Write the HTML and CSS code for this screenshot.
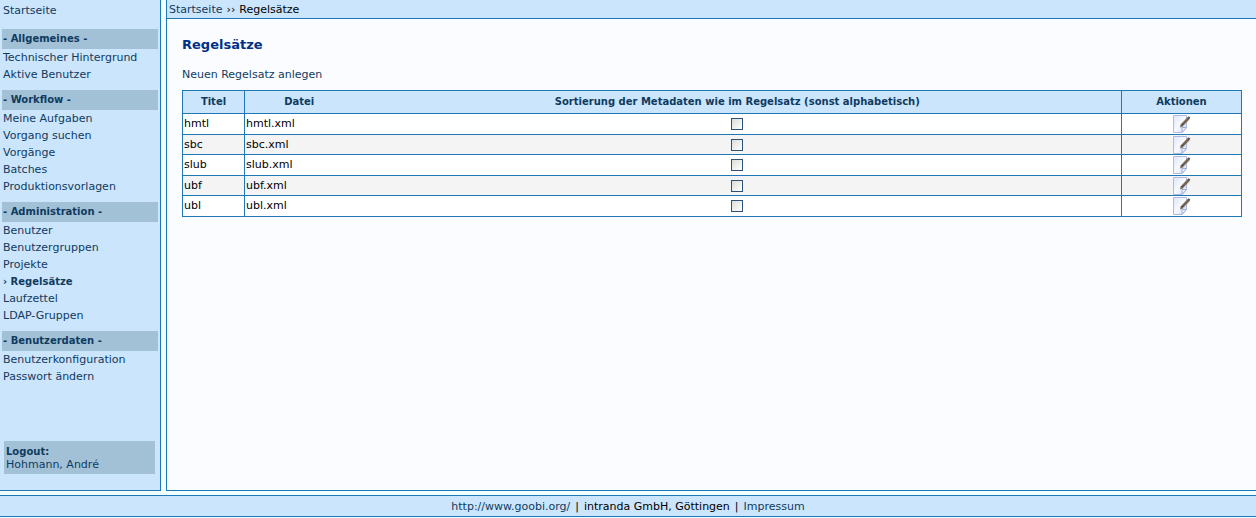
FILE: index.html
```html
<!DOCTYPE html>
<html lang="de">
<head>
<meta charset="utf-8">
<title>Regelsätze</title>
<link rel="stylesheet" href="styles.css">
</head>
<body>
<svg class="defs" width="0" height="0" aria-hidden="true">
  <defs>
    <linearGradient id="paper" x1="0" y1="0" x2="1" y2="1">
      <stop offset="0" stop-color="#dfe5fa"/><stop offset="0.5" stop-color="#f7f9ff"/><stop offset="1" stop-color="#d3dcf7"/>
    </linearGradient>
    <symbol id="edit" viewBox="0 0 18 18">
      <path d="M.5 .5h13v12l-4.500 5H.5z" fill="url(#paper)" stroke="#adbae2"/>
      <path d="M9 17.500v-5h4.500z" fill="#edf2ff" stroke="#9daddf"/>
      <path d="M8 11.500L16 3" stroke="#b5aaa3" stroke-width="4" opacity=".5"/>
      <path d="M8.500 10.500L16.500 2" stroke="#5d5040" stroke-width="2.400"/>
      <path d="M7 12.500l.8-3 2 2z" fill="#706a65"/>
      <path d="M10 8.500l5-5.300" stroke="#a58c68" stroke-width=".7"/>
    </symbol>
  </defs>
</svg>
<div class="page">
  <div class="columns">
    <nav class="sidebar">
      <a class="item home" href="#">Startseite</a>
      <section class="group">
        <h2>- Allgemeines -</h2>
        <a class="item" href="#">Technischer Hintergrund</a>
        <a class="item" href="#">Aktive Benutzer</a>
      </section>
      <section class="group">
        <h2>- Workflow -</h2>
        <a class="item" href="#">Meine Aufgaben</a>
        <a class="item" href="#">Vorgang suchen</a>
        <a class="item" href="#">Vorgänge</a>
        <a class="item" href="#">Batches</a>
        <a class="item" href="#">Produktionsvorlagen</a>
      </section>
      <section class="group">
        <h2>- Administration -</h2>
        <a class="item" href="#">Benutzer</a>
        <a class="item" href="#">Benutzergruppen</a>
        <a class="item" href="#">Projekte</a>
        <a class="item active" href="#">› Regelsätze</a>
        <a class="item" href="#">Laufzettel</a>
        <a class="item" href="#">LDAP-Gruppen</a>
      </section>
      <section class="group">
        <h2>- Benutzerdaten -</h2>
        <a class="item" href="#">Benutzerkonfiguration</a>
        <a class="item" href="#">Passwort ändern</a>
      </section>
      <a class="logout" href="#"><strong>Logout:</strong><span>Hohmann, André</span></a>
    </nav>
    <main class="main">
      <div class="breadcrumb"><a href="#">Startseite</a><span>››</span><span>Regelsätze</span></div>
      <div class="content">
        <h1>Regelsätze</h1>
        <a class="new" href="#">Neuen Regelsatz anlegen</a>
        <table>
          <colgroup><col class="c-title"><col class="c-file"><col><col class="c-actions"></colgroup>
          <thead>
            <tr><th>Titel</th><th class="file">Datei</th><th class="sort">Sortierung der Metadaten wie im Regelsatz (sonst alphabetisch)</th><th>Aktionen</th></tr>
          </thead>
          <tbody>
            <tr><td>hmtl</td><td class="file">hmtl.xml</td><td class="sort"><input type="checkbox" aria-label="Sortierung hmtl"></td><td class="action"><a href="#" aria-label="hmtl bearbeiten"><svg width="18" height="18"><use href="#edit"/></svg></a></td></tr>
            <tr><td>sbc</td><td class="file">sbc.xml</td><td class="sort"><input type="checkbox" aria-label="Sortierung sbc"></td><td class="action"><a href="#" aria-label="sbc bearbeiten"><svg width="18" height="18"><use href="#edit"/></svg></a></td></tr>
            <tr><td>slub</td><td class="file">slub.xml</td><td class="sort"><input type="checkbox" aria-label="Sortierung slub"></td><td class="action"><a href="#" aria-label="slub bearbeiten"><svg width="18" height="18"><use href="#edit"/></svg></a></td></tr>
            <tr><td>ubf</td><td class="file">ubf.xml</td><td class="sort"><input type="checkbox" aria-label="Sortierung ubf"></td><td class="action"><a href="#" aria-label="ubf bearbeiten"><svg width="18" height="18"><use href="#edit"/></svg></a></td></tr>
            <tr><td>ubl</td><td class="file">ubl.xml</td><td class="sort"><input type="checkbox" aria-label="Sortierung ubl"></td><td class="action"><a href="#" aria-label="ubl bearbeiten"><svg width="18" height="18"><use href="#edit"/></svg></a></td></tr>
          </tbody>
        </table>
      </div>
    </main>
  </div>
  <footer class="footer"><a href="#">http://www.goobi.org/</a><span>|</span><span>intranda GmbH, Göttingen</span><span>|</span><a href="#">Impressum</a></footer>
</div>
</body>
</html>
```
FILE: styles.css
```css
* { box-sizing: border-box; }
body {
  margin: 0;
  background: #f0ffff;
  color: #000;
  font: 11px/17px Verdana, "DejaVu Sans", sans-serif;
}
a { color: #0f3b5f; text-decoration: none; }
.defs { position: absolute; }
.page {
  display: flex;
  flex-direction: column;
  min-height: 100vh;
  padding-bottom: 1px;
}
.columns { display: flex; flex: 1; gap: 5px; margin-bottom: 4px; }
.sidebar {
  display: flex;
  flex-direction: column;
  width: 161px;
  padding: 2px 2px 16px;
  background: #cbe5fc;
  border: solid #1f78b4;
  border-width: 0 1px 1px 0;
}
.item { padding-left: 1px; }
.home { margin-bottom: 10px; }
.group { display: flex; flex-direction: column; margin-bottom: 7px; }
.group h2 {
  margin: 0;
  padding-left: 1px;
  background: #a2c1d7;
  color: #0f3b5f;
  font-size: 10px;
  line-height: 20px;
}
.active, .logout strong { font-size: 10px; font-weight: bold; }
.logout {
  display: flex;
  flex-direction: column;
  margin: auto 3px 0 2px;
  padding: 4px 2px 3px;
  background: #a2c1d7;
  line-height: 13px;
}
.main {
  flex: 1;
  background: #fafcff;
  border: solid #1f78b4;
  border-width: 0 0 1px 1px;
}
.breadcrumb {
  display: flex;
  gap: 4px;
  padding: 1px 2px 0;
  background: #cbe5fc;
  border-bottom: 1px solid #1f78b4;
}
.content { padding: 16px 14px 16px 15px; }
h1 {
  margin: 0 0 11px;
  color: #003087;
  font-size: 13px;
  line-height: 20px;
}
.new { display: block; margin-bottom: 7px; }
table {
  width: 100%;
  table-layout: fixed;
  border-collapse: collapse;
  background: #fff;
}
.c-title { width: 62px; }
.c-file { width: 109px; }
.c-actions { width: 120px; }
th, td { border: 1px solid #1f78b4; }
th {
  height: 23px;
  padding: 0;
  background: #cbe5fc;
  color: #0f3b5f;
  font-size: 10px;
  line-height: 20px;
}
td { padding: 0 1px; line-height: 20px; }
tbody tr:nth-child(even) { background: #f4f4f4; }
tbody tr:nth-child(even) td { line-height: 19px; }
.file { border-right: 0; }
.sort { border-left: 0; text-align: center; }
.action { text-align: center; }
.action svg { display: block; margin: 0 auto; }
input {
  appearance: none;
  display: block;
  width: 12px;
  height: 12px;
  margin: 0 auto;
  border: 1px solid #2c527b;
  background: linear-gradient(135deg, #dcdcd7, #fff);
}
input:checked { background: #2c527b; }
.footer {
  display: flex;
  justify-content: center;
  gap: 5px;
  padding: 2px 0 1px;
  background: #cbe5fc;
  border: solid #1f78b4;
  border-width: 1px 0;
}
```
